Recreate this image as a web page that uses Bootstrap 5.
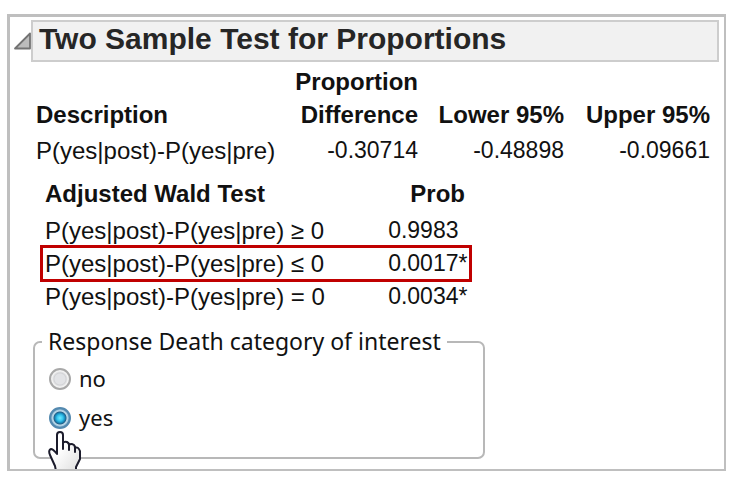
<!DOCTYPE html>
<html lang="en">
<head>
<meta charset="utf-8">
<meta name="viewport" content="width=device-width, initial-scale=1">
<title>Two Sample Test for Proportions</title>
<link rel="stylesheet" href="https://cdn.jsdelivr.net/npm/bootstrap@5.3.0/dist/css/bootstrap.min.css">
<style>
body { background: #fff; color: #111; font-family: "Liberation Sans", Arial, sans-serif; padding: 14px 12px 13px 7px; }
.report { border: 3px solid #bfbfbf; border-right-width: 2px; border-bottom-width: 2px; padding: 3px 5px 10px 3px; }
.disclosure { width: 18px; height: 18px; margin: 12px 0 0; flex: none; }
.report-title { font-size: 30px; line-height: 34px; padding: 0 6px 4px; color: #262626; background: #f1f1f1; border: 2px solid #cdcdcd; }
.stats { font-size: 24px; line-height: 33px; color: #111; }
.stats th, .stats td { padding: 0; text-align: right; vertical-align: bottom; white-space: nowrap; }
.stats th:first-child { text-align: left; }
.stats tbody th { font-weight: 400; }
.stats td { font-size: 23px; }
.estimates { margin: 3px 0 0 23px; width: calc(100% - 32px); }
.estimates tbody th, .estimates tbody td { padding-top: 3px; }
.estimates .limit { width: 146px; }
.tests { margin: 10px 0 0 29px; width: 428px; }
.tests th:first-child { padding-left: 3px; }
.tests thead th { padding-right: 5px; padding-bottom: 4px; }
.tests tbody td { text-align: left; padding-left: 58px; }
.tests .flagged { outline: 3px solid #c00000; outline-offset: -1px; }
.category { margin: 11px 0 0 20px; width: 452px; padding: 0 12px 20px 14px; border: 2px solid #b8b8b8; border-radius: 7px; font-family: "Noto Sans", "Open Sans", sans-serif; font-size: 22px; line-height: 39px; }
.category legend { float: none; width: auto; font-size: 23px; line-height: 35px; margin: 0 0 0 -7px; padding: 0 6px; }
.category .form-check-input { width: 22px; height: 22px; margin: 0; border: 2px solid #a8a8a8; background: radial-gradient(circle at center, #e2e3e6 0 5px, #d2d3d6 6px, #f4f4f4 8px, #ededed 9px); flex: none; }
.category .form-check-input:checked { border-color: #5389af; background: radial-gradient(circle at center, #6cebff 0, #35c4ee 3px, #1688b8 5px, #235f87 6px, #b9d8e9 7px, #a9cbdf 8px, #669bbe 9px); }
.hand { left: 13px; bottom: -12px; width: 34px; height: 38px; }
</style>
<script src="https://cdn.jsdelivr.net/npm/bootstrap@5.3.0/dist/js/bootstrap.bundle.min.js"></script>
</head>
<body>
<main class="report">
  <header class="d-flex align-items-start">
    <svg class="disclosure" viewBox="0 0 18 18" aria-hidden="true"><path d="M2 16.5 17 1.500V16.500Z" fill="#bcbcbc" stroke="#737373" stroke-width="1.800" stroke-linejoin="round"/></svg>
    <h1 class="report-title flex-grow-1 fw-bold mb-0">Two Sample Test for Proportions</h1>
  </header>

  <table class="stats estimates">
    <thead>
      <tr><th scope="col">Description</th><th scope="col">Proportion<br>Difference</th><th class="limit" scope="col">Lower 95%</th><th class="limit" scope="col">Upper 95%</th></tr>
    </thead>
    <tbody>
      <tr><th scope="row">P(yes|post)-P(yes|pre)</th><td>-0.30714</td><td>-0.48898</td><td>-0.09661</td></tr>
    </tbody>
  </table>

  <table class="stats tests">
    <thead>
      <tr><th scope="col">Adjusted Wald Test</th><th scope="col">Prob</th></tr>
    </thead>
    <tbody>
      <tr><th scope="row">P(yes|post)-P(yes|pre) ≥ 0</th><td>0.9983</td></tr>
      <tr class="flagged"><th scope="row">P(yes|post)-P(yes|pre) ≤ 0</th><td>0.0017*</td></tr>
      <tr><th scope="row">P(yes|post)-P(yes|pre) = 0</th><td>0.0034*</td></tr>
    </tbody>
  </table>

  <fieldset class="category position-relative">
    <legend>Response Death category of interest</legend>
    <div class="d-flex align-items-center gap-2">
      <input class="form-check-input" type="radio" name="category" id="cat-no"><label for="cat-no">no</label>
    </div>
    <div class="d-flex align-items-center gap-2">
      <input class="form-check-input" type="radio" name="category" id="cat-yes" checked><label for="cat-yes">yes</label>
    </div>
    <svg class="hand position-absolute" viewBox="0 0 34 38" aria-hidden="true">
      <defs><linearGradient id="skin" x1="0" y1="0" x2="1" y2="1"><stop offset=".4" stop-color="#fff"/><stop offset="1" stop-color="#ddd"/></linearGradient></defs>
      <path d="M8 40 7 35 2 24Q0 19 3 18Q5 18 9 23V4Q9 1 12 1Q15 1 15 4V12Q16 10 19 11Q21 12 21 14Q23 12 26 14Q27 15 27 17Q30 15 32 20V28L28 36V40Z" fill="url(#skin)" stroke="#1c1c2c" stroke-width="2" stroke-linejoin="round"/>
      <path d="M15 11V18M21 13V19M27 16V21" fill="none" stroke="#1c1c2c" stroke-width="2" stroke-linecap="round"/>
    </svg>
  </fieldset>
</main>
</body>
</html>
